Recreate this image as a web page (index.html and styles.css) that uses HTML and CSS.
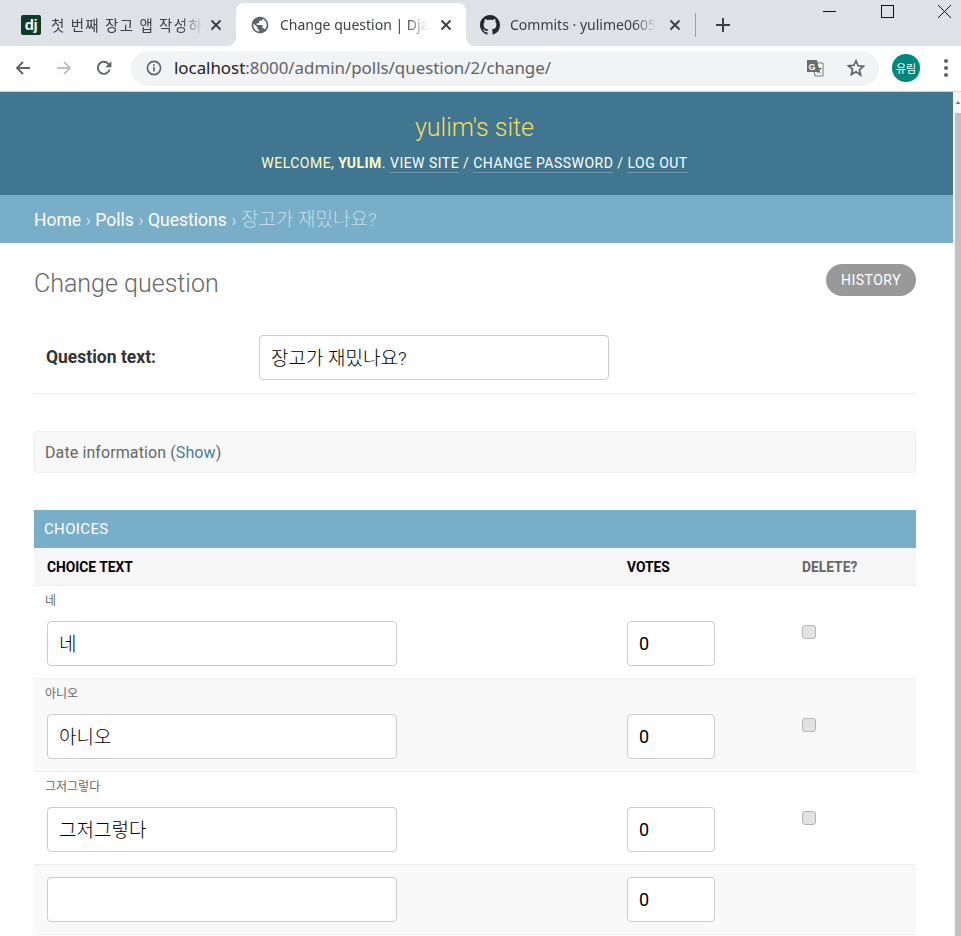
FILE: index.html
```html
<!DOCTYPE html>
<html lang="ko">
<head>
<meta charset="utf-8">
<title>Change question | Django site admin</title>
<link rel="stylesheet" href="styles.css">
</head>
<body>
<div class="browser">
  <div class="tabstrip">
    <div class="tab">
      <span class="favicon dj">dj</span>
      <span class="tab-title tab-title-ko">첫 번째 장고 앱 작성하</span>
      <svg class="tab-close" viewBox="0 0 12 12"><path d="M1.5 1.5l9 9M10.5 1.5l-9 9"/></svg>
    </div>
    <div class="tab tab-active">
      <svg class="favicon" viewBox="0 0 24 24"><path fill="#5f6368" d="M12 2C6.48 2 2 6.48 2 12s4.48 10 10 10 10-4.48 10-10S17.52 2 12 2zm-1 17.93c-3.95-.49-7-3.85-7-7.93 0-.62.08-1.21.21-1.79L9 15v1c0 1.1.9 2 2 2v1.93zm6.9-2.54c-.26-.81-1-1.39-1.9-1.39h-1v-3c0-.55-.45-1-1-1H8v-2h2c.55 0 1-.45 1-1V7h2c1.1 0 2-.9 2-2v-.41c2.93 1.19 5 4.06 5 7.41 0 2.08-.8 3.97-2.1 5.39z"/></svg>
      <span class="tab-title">Change question | Dja</span>
      <svg class="tab-close" viewBox="0 0 12 12"><path d="M1.5 1.5l9 9M10.5 1.5l-9 9"/></svg>
    </div>
    <div class="tab">
      <svg class="favicon" viewBox="0 0 16 16"><path fill="#24292e" d="M8 0C3.58 0 0 3.58 0 8c0 3.54 2.29 6.53 5.47 7.59.4.07.55-.17.55-.38 0-.19-.01-.82-.01-1.49-2.01.37-2.53-.49-2.69-.94-.09-.23-.48-.94-.82-1.13-.28-.15-.68-.52-.01-.53.63-.01 1.08.58 1.23.82.72 1.21 1.87.87 2.33.66.07-.52.28-.87.51-1.07-1.78-.2-3.64-.89-3.64-3.95 0-.87.31-1.59.82-2.15-.08-.2-.36-1.02.08-2.12 0 0 .67-.21 2.2.82.64-.18 1.32-.27 2-.27.68 0 1.36.09 2 .27 1.53-1.04 2.2-.82 2.2-.82.44 1.1.16 1.92.08 2.12.51.56.82 1.27.82 2.15 0 3.07-1.87 3.75-3.65 3.95.29.25.54.73.54 1.48 0 1.07-.01 1.93-.01 2.2 0 .21.15.46.55.38A8.013 8.013 0 0016 8c0-4.42-3.58-8-8-8z"/></svg>
      <span class="tab-title">Commits · yulime0605</span>
      <svg class="tab-close" viewBox="0 0 12 12"><path d="M1.5 1.5l9 9M10.5 1.5l-9 9"/></svg>
    </div>
    <span class="tab-sep"></span>
    <svg class="new-tab" viewBox="0 0 16 16"><path d="M8 1v14M1 8h14"/></svg>
    <div class="win-controls">
      <svg class="win-min" viewBox="0 0 13 13"><path d="M0 6.5h13"/></svg>
      <svg class="win-max" viewBox="0 0 13 13"><rect x=".5" y=".5" width="12" height="12"/></svg>
      <svg class="win-close" viewBox="0 0 13 13"><path d="M0 0l13 13M13 0L0 13"/></svg>
    </div>
  </div>
  <div class="toolbar">
    <svg class="nav-icon" viewBox="0 0 16 16"><path stroke="#5f6368" d="M15 8H2M8 2L2 8l6 6"/></svg>
    <svg class="nav-icon nav-forward" viewBox="0 0 16 16"><path stroke="#bdc1c6" d="M1 8h13M8 2l6 6-6 6"/></svg>
    <svg class="nav-icon nav-reload" viewBox="0 0 16 16"><path stroke="#5f6368" d="M13.6 9.5A6 6 0 1 1 12.3 3.8L14.6 6"/><path fill="#5f6368" d="M15.4 1.2v6h-6z"/></svg>
    <div class="omnibox">
      <svg class="info-icon" viewBox="0 0 16 16"><circle cx="8" cy="8" r="6.6" fill="none" stroke="#5f6368" stroke-width="1.6"/><path fill="#5f6368" d="M7.2 7h1.6v4.6H7.2zM7.2 4.3h1.6v1.6H7.2z"/></svg>
      <span class="url"><span class="url-host">localhost</span>:8000/admin/polls/question/2/change/</span>
      <svg class="translate-icon" viewBox="0 0 18 18"><path fill="#fff" stroke="#757575" d="M7 4h10v13H9z"/><path fill="#6b6b6b" d="M1 1h10l2.6 12H1z"/><text class="translate-g" x="2.6" y="10.6">G</text><path stroke="#5f6368" fill="none" d="M10.5 9.5h5M13 8.5v1M11.3 14.5l3.6-4.8M11.6 10.5l3.3 4"/></svg>
      <svg class="star-icon" viewBox="0 0 18 18"><path d="M9 1.9l2.1 4.9 5.3.5-4 3.5 1.2 5.2L9 12.8l-4.6 2.7 1.2-5.2-4-3.5 5.3-.5z"/></svg>
    </div>
    <span class="avatar">유림</span>
    <span class="menu-dots"><i></i><i></i><i></i></span>
  </div>
  <div class="viewport">
    <div class="page">
      <header class="site-header">
        <h1 class="branding">yulim's site</h1>
        <div class="user-tools">WELCOME, <strong>YULIM</strong>. <a class="tool-link">VIEW SITE</a> / <a class="tool-link">CHANGE PASSWORD</a> / <a class="tool-link">LOG OUT</a></div>
      </header>
      <nav class="breadcrumbs"><a>Home</a><span class="crumb-sep">›</span><a>Polls</a><span class="crumb-sep">›</span><a>Questions</a><span class="crumb-sep">›</span><span class="crumb-current">장고가 재밌나요?</span></nav>
      <main class="content">
        <div class="title-row">
          <h2 class="page-title">Change question</h2>
          <a class="history-btn">HISTORY</a>
        </div>
        <div class="form-row">
          <label class="form-label">Question text:</label>
          <input class="text-input" type="text" value="장고가 재밌나요?">
        </div>
        <div class="collapsed">Date information (<a class="show-link">Show</a>)</div>
        <h3 class="inline-title">CHOICES</h3>
        <table class="choices">
          <colgroup><col class="col-text"><col class="col-votes"><col class="col-del"></colgroup>
          <thead>
            <tr><th>CHOICE TEXT</th><th>VOTES</th><th class="th-muted">DELETE?</th></tr>
          </thead>
          <tbody>
            <tr class="row-original">
              <td colspan="3"><div class="original">네</div></td>
            </tr>
            <tr class="row-fields">
              <td><input class="text-input" type="text" value="네"></td>
              <td><input class="num-input" type="text" value="0"></td>
              <td><input class="del-check" type="checkbox"></td>
            </tr>
            <tr class="row-original row-alt">
              <td colspan="3"><div class="original">아니오</div></td>
            </tr>
            <tr class="row-fields row-alt">
              <td><input class="text-input" type="text" value="아니오"></td>
              <td><input class="num-input" type="text" value="0"></td>
              <td><input class="del-check" type="checkbox"></td>
            </tr>
            <tr class="row-original">
              <td colspan="3"><div class="original">그저그렇다</div></td>
            </tr>
            <tr class="row-fields">
              <td><input class="text-input" type="text" value="그저그렇다"></td>
              <td><input class="num-input" type="text" value="0"></td>
              <td><input class="del-check" type="checkbox"></td>
            </tr>
            <tr class="row-fields row-alt row-new">
              <td><input class="text-input" type="text" value=""></td>
              <td><input class="num-input" type="text" value="0"></td>
              <td></td>
            </tr>
          </tbody>
        </table>
      </main>
    </div>
    <div class="scrollbar">
      <div class="scroll-arrow"><svg viewBox="0 0 8 4"><path d="M4 0l3 4H1z"/></svg></div>
      <div class="scroll-thumb"></div>
    </div>
  </div>
</div>
</body>
</html>
```

FILE: styles.css
```css
* { box-sizing: border-box; }
html, body { margin: 0; padding: 0; height: 100%; overflow: hidden; background: #fff; }
body { font-family: Roboto, "Noto Sans CJK KR", sans-serif; color: #333; }
.browser { display: flex; flex-direction: column; height: 936px; width: 961px; }

/* tab strip */
.tabstrip { display: flex; align-items: stretch; height: 46px; padding: 3px 0 0 7px; background: #dee1e6; flex: none; }
.tab { display: flex; align-items: center; width: 229px; padding: 0 14px 0 14px; flex: none; }
.tab-active { position: relative; background: #fff; border-radius: 8px 8px 0 0; width: 230px; }
.tab-active::before, .tab-active::after { content: ""; position: absolute; bottom: 0; width: 8px; height: 8px; }
.tab-active::before { left: -8px; background: radial-gradient(circle at 0 0, #dee1e6 7.5px, #fff 8px); }
.tab-active::after { right: -8px; background: radial-gradient(circle at 100% 0, #dee1e6 7.5px, #fff 8px); }
.favicon { width: 20px; height: 20px; flex: none; }
.dj { background: #0c3c26; color: #fff; border-radius: 2px; font: 700 15px/19px "Liberation Sans", sans-serif; text-align: center; letter-spacing: -.5px; }
.tab-title { flex: none; margin-left: 10px; white-space: nowrap; font: 14px/20px "Noto Sans", "Noto Sans CJK KR", sans-serif; color: #3c4043; -webkit-mask-image: linear-gradient(to right, #000 calc(100% - 22px), transparent 100%); mask-image: linear-gradient(to right, #000 calc(100% - 22px), transparent 100%); }
.tab-title-ko { font-size: 14.5px; letter-spacing: 1.3px; }
.tab-close { width: 12px; height: 12px; flex: none; margin-left: auto; fill: none; stroke: #3c4043; stroke-width: 1.9; }
.tab-sep { width: 1px; height: 24px; margin: 10px 0 0 0; background: #9aa0a6; flex: none; }
.new-tab { width: 16px; height: 16px; margin: 14px 0 0 19px; fill: none; stroke: #3c4043; stroke-width: 2; flex: none; }
.win-controls { display: flex; align-items: flex-start; margin-left: auto; padding: 2px 10px 0 0; gap: 44px; }
.win-controls svg { width: 13px; height: 13px; fill: none; stroke: #111; stroke-width: 1; flex: none; }
.win-controls .win-min { margin-right: 1px; }

/* toolbar */
.toolbar { display: flex; align-items: center; height: 46px; padding: 0 0 1px 15px; background: #fff; border-bottom: 1px solid #cfd2d6; flex: none; }
.nav-icon { width: 16px; height: 16px; fill: none; stroke-width: 1.9; flex: none; }
.nav-forward { margin-left: 25px; }
.nav-reload { margin-left: 24px; }
.omnibox { display: flex; align-items: center; width: 748px; height: 35px; margin-left: 19px; padding: 0 14px 0 15px; border-radius: 18px; background: #f1f3f4; flex: none; }
.info-icon { width: 16px; height: 16px; flex: none; }
.url { margin-left: 12px; font: 16.87px/24px "Noto Sans", sans-serif; color: #5f6368; white-space: nowrap; }
.url-host { color: #202124; }
.translate-icon { width: 18px; height: 18px; margin-left: auto; flex: none; }
.translate-g { font: 700 9px "Liberation Sans", sans-serif; fill: #fff; }
.star-icon { width: 18px; height: 18px; margin-left: 23px; fill: none; stroke: #5f6368; stroke-width: 1.7; flex: none; }
.avatar { width: 28px; height: 28px; margin-left: 13px; border-radius: 50%; background: #00897b; color: #fff; font: 11px/28px "Noto Sans CJK KR", sans-serif; text-align: center; flex: none; }
.menu-dots { display: flex; flex-direction: column; gap: 3px; margin-left: 24px; flex: none; }
.menu-dots i { display: block; width: 4px; height: 4px; border-radius: 50%; background: #5f6368; }

/* viewport */
.viewport { display: flex; flex: 1; min-height: 0; }
.page { width: 953px; flex: none; overflow: hidden; }
.scrollbar { display: flex; flex-direction: column; width: 8px; padding-left: 2px; background: #f5f5f5; flex: none; }
.scroll-arrow { height: 21px; display: flex; align-items: center; justify-content: center; }
.scroll-arrow svg { width: 6px; height: 3px; fill: #777; }
.scroll-thumb { flex: 1; background: #c1c1c1; }

/* site */
.site-header { height: 103px; padding: 21px 4px 0 0; background: #417690; text-align: center; }
.branding { margin: 0; font-size: 25px; line-height: 30px; font-weight: 300; color: #f5dd5d; }
.user-tools { margin-top: 11px; font-size: 14px; line-height: 18px; letter-spacing: .48px; color: #ffc; }
.user-tools strong { font-weight: 700; }
.tool-link { display: inline-block; color: #fff; border-bottom: 1px solid rgba(255,255,255,.25); line-height: 17px; }
.breadcrumbs { display: flex; align-items: baseline; height: 48px; padding: 9px 0 0 34px; background: #79aec8; font-size: 17.5px; color: #c4dce8; }
.breadcrumbs a { color: #fff; }
.crumb-sep { margin: 0 4.5px; }
.crumb-current { color: #c4dce8; font-size: 19px; font-weight: 300; }

.content { padding: 0 37px 0 34px; }
.title-row { display: flex; justify-content: space-between; align-items: flex-start; height: 92px; padding-top: 21px; }
.page-title { margin: 5px 0 0; font-size: 25px; line-height: 30px; font-weight: 300; color: #666; }
.history-btn { display: block; width: 90px; height: 32px; border-radius: 16px; background: #999; color: #fff; font-size: 14px; line-height: 32px; letter-spacing: .5px; text-align: center; }
.form-row { display: flex; align-items: flex-start; height: 59px; padding-left: 12px; border-bottom: 1px solid #eee; }
.form-label { width: 213px; font-size: 17.5px; line-height: 44px; font-weight: 700; color: #333; }
.text-input { display: block; width: 350px; height: 45px; padding: 0 11px 2px; border: 1px solid #ccc; border-radius: 4px; background: #fff; color: #000; font: 300 19px Roboto, "Noto Sans CJK KR", sans-serif; outline: 0; }
.collapsed { height: 42px; margin-top: 37px; padding-left: 10px; border: 1px solid #eee; border-radius: 4px; background: #f8f8f8; font-size: 16px; line-height: 41px; letter-spacing: .1px; color: #666; }
.show-link { color: #447e9b; }
.inline-title { height: 38px; margin: 37px 0 0; padding-left: 10px; background: #79aec8; color: #fff; font-size: 15px; line-height: 38px; font-weight: 400; letter-spacing: .35px; }
.choices { width: 882px; table-layout: fixed; border-collapse: separate; border-spacing: 0; }
.col-text { width: 580px; }
.col-votes { width: 175px; }
.col-del { width: 127px; }
.choices th { height: 38px; padding: 0 0 0 13px; background: #f6f6f6; border-bottom: 1px solid #eee; color: #000; font-size: 13.8px; font-weight: 700; text-align: left; }
.choices .th-muted { color: #666; }
.choices td { padding: 0 0 0 13px; vertical-align: top; }
.choices .row-original td { height: 35px; padding-left: 11px; }
.original { padding-top: 8px; font-size: 12px; line-height: 14px; color: #666; }
.row-fields td { height: 58px; border-bottom: 1px solid #eee; }
.choices .row-new td { height: 70px; padding-top: 12px; }
.row-alt { background: #f9f9f9; }
.num-input { display: block; width: 88px; height: 45px; padding: 0 11px; border: 1px solid #ccc; border-radius: 4px; background: #fff; color: #000; font: 18px Roboto, sans-serif; outline: 0; }
.del-check { display: block; width: 14px; height: 14px; margin: 4px 0 0; appearance: none; -webkit-appearance: none; border: 1px solid #b5b5b5; border-radius: 3px; background: #e2e2e2; }
```
